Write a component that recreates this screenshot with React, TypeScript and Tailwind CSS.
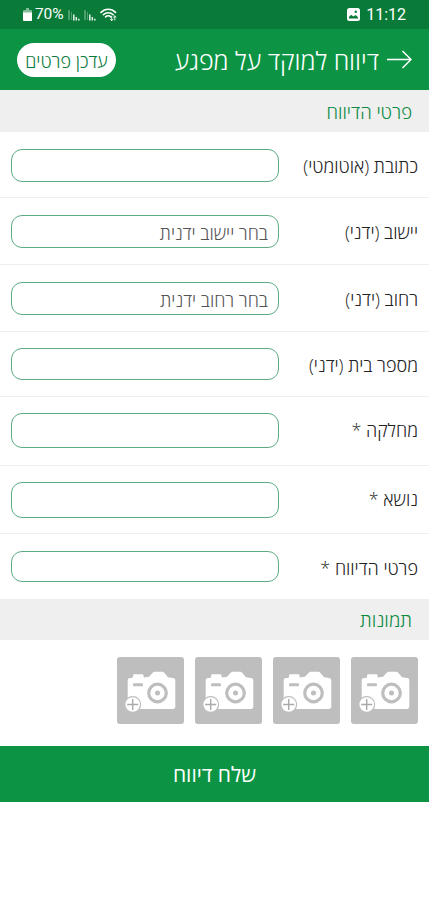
import React from 'react';

interface Field {
  label: string;
  placeholder?: string;
  row: string;
  input: string;
}

const fields: Field[] = [
  { label: 'כתובת (אוטומטי)', row: 'h-[66px] pt-[17px]', input: 'h-[33px]' },
  { label: 'יישוב (ידני)', placeholder: 'בחר יישוב ידנית', row: 'h-[67px] pt-[17px]', input: 'h-[33px]' },
  { label: 'רחוב (ידני)', placeholder: 'בחר רחוב ידנית', row: 'h-[67px] pt-[17px]', input: 'h-[33px]' },
  { label: 'מספר בית (ידני)', row: 'h-[65px] pt-[16px]', input: 'h-8' },
  { label: 'מחלקה *', row: 'h-[69px] pt-[16px]', input: 'h-[35px]' },
  { label: 'נושא *', row: 'h-[68px] pt-[16px]', input: 'h-9' },
  { label: 'פרטי הדיווח *', row: 'h-[65px] pt-[17px] border-b-0', input: 'h-[31px]' },
];

const SignalIcon: React.FC = () => (
  <svg width="12" height="12" viewBox="0 0 12 12" fill="none" stroke="white">
    <path d="M1 1v10" strokeOpacity="0.55" />
    <path d="M3.500 3v8" strokeOpacity="0.3" />
    <path d="M5.800 5.500v6M8.300 8v3.500M10.800 9.800v1.700" strokeOpacity="0.85" strokeWidth="1.600" />
  </svg>
);

const WifiIcon: React.FC = () => (
  <svg width="17" height="14" viewBox="0 0 17 14" fill="none" stroke="white" strokeLinecap="round">
    <path d="M1 4.400C5 .2 11.500 .2 15.500 4.400" strokeWidth="1.600" />
    <path d="M3.300 6.700C6 4 10.500 4 13.200 6.700" strokeWidth="1.600" />
    <path d="M5.600 8.900C7.200 7.300 9.300 7.300 10.800 8.900" strokeWidth="1.600" />
    <path d="M11.700 8.200v4.300M10.300 11.200l1.400 1.400 1.300-1.400M14.800 12V8M13.600 9.100L14.800 8l1.200 1.100" strokeWidth=".9" />
  </svg>
);

const CameraTile: React.FC = () => (
  <button className="h-[67px] w-[67px] rounded-[3px] bg-[#bebebe]">
    <svg width="67" height="67" viewBox="0 0 67 67" fill="none">
      <path
        d="M13 21h2.500l1-3.800h9.500l1 3.300 5-.7 4-4.300c.6-.5 1-.7 2-.7h7c1 0 1.500.2 2 .8l4 4.700 5 .7c1.500.2 2.300 1 2.300 2.500v26c0 1.500-.8 2.500-2.300 2.500H13c-1.500 0-2.300-1-2.300-2.500v-26c0-1.500.8-2.500 2.300-2.500z"
        fill="white"
      />
      <rect x="16" y="26.300" width="10" height="3" rx="1" fill="#bebebe" />
      <circle cx="40.500" cy="36" r="8.800" stroke="#bebebe" strokeWidth="3.200" />
      <circle cx="40.500" cy="36" r="2.500" fill="#bebebe" />
      <circle cx="15.700" cy="47.500" r="7.900" fill="white" stroke="#bebebe" strokeWidth="1.200" />
      <path d="M15.700 42v11M10.200 47.500h11" stroke="#aaa" strokeWidth="1.400" />
    </svg>
  </button>
);

const StatusBar: React.FC = () => (
  <div dir="ltr" className="flex h-[29px] items-center justify-between bg-[#097a37] pr-[23px] pl-[23px] text-white">
    <div className="flex items-center">
      <svg width="9" height="13" viewBox="0 0 9 13">
        <path d="M3 0h3v2h2q1 0 1 1v9q0 1-1 1H1q-1 0-1-1V3q0-1 1-1h2z" fill="white" fillOpacity=".5" />
        <path d="M0 4.500h9v7.500q0 1-1 1H1q-1 0-1-1z" fill="white" />
      </svg>
      <span className="ml-[3px] w-[33px] font-[Roboto,sans-serif] text-[15.5px] leading-none tracking-[-0.1px]">70%</span>
      <div className="flex gap-1">
        <SignalIcon />
        <SignalIcon />
      </div>
      <div className="ml-1">
        <WifiIcon />
      </div>
    </div>
    <div className="flex items-center gap-[6px]">
      <svg width="13" height="13" viewBox="0 0 13 13">
        <rect width="13" height="13" rx="2.500" fill="white" />
        <path d="M2 10.500V8.800l2.300-2 2 1.700 2.200-1.500L11 9.300v1.200z" fill="#097a37" />
        <circle cx="8.800" cy="3.800" r="1.200" fill="#097a37" />
      </svg>
      <span className="font-[Roboto,sans-serif] text-[16px] leading-none font-normal">11:12</span>
    </div>
  </div>
);

const App: React.FC = () => {
  return (
    <div dir="rtl" className="min-h-screen bg-white font-['Open_Sans','Noto_Sans',sans-serif] text-[#222]">
      <StatusBar />

      <header className="flex h-[61px] items-center justify-between bg-[#0c9444] pr-[17px] pl-[17px] text-white">
        <div className="flex items-center gap-2">
          <svg width="25" height="19" viewBox="0 0 25 19" fill="none" stroke="white" strokeWidth="1.500">
            <path d="M0 9.500h24M15.500 1l8.500 8.500-8.500 8.500" />
          </svg>
          <h1 className="pt-0.5 text-[25px] leading-none font-light whitespace-nowrap">דיווח למוקד על מפגע</h1>
        </div>
        <button className="h-[34px] w-[99px] rounded-full bg-white pt-0.5 text-[18px] leading-none font-light whitespace-nowrap text-[#087a3c]">
          עדכן פרטים
        </button>
      </header>

      <h2 className="flex h-[42px] items-center bg-[#efefef] pt-0.5 pr-[17px] text-[18.5px] font-light text-[#0c8a42]">פרטי הדיווח</h2>

      {fields.map((field) => (
        <div key={field.label} className={`flex items-start justify-between border-b border-[#eeeeee] px-[11px] ${field.row}`}>
          <label className="flex h-[35px] items-center text-[18px] font-light whitespace-nowrap">{field.label}</label>
          <input
            type="text"
            aria-label={field.label}
            placeholder={field.placeholder}
            className={`w-[268px] rounded-[11px] border border-[#5dab84] bg-white px-[10px] pt-0.5 text-[18px] font-light outline-none placeholder:text-[#555] ${field.input}`}
          />
        </div>
      ))}

      <h2 className="flex h-[41px] items-center bg-[#efefef] pt-0.5 pr-[17px] text-[19px] font-light text-[#0c8a42]">תמונות</h2>

      <div className="flex h-[106px] gap-[11px] px-[11px] pt-[17px]">
        {[1, 2, 3, 4].map((n) => (
          <CameraTile key={n} />
        ))}
      </div>

      <button className="flex h-[56px] w-full items-center justify-center bg-[#0c9444] pt-0.5 text-[21px] text-white">שלח דיווח</button>
    </div>
  );
};

export default App;
